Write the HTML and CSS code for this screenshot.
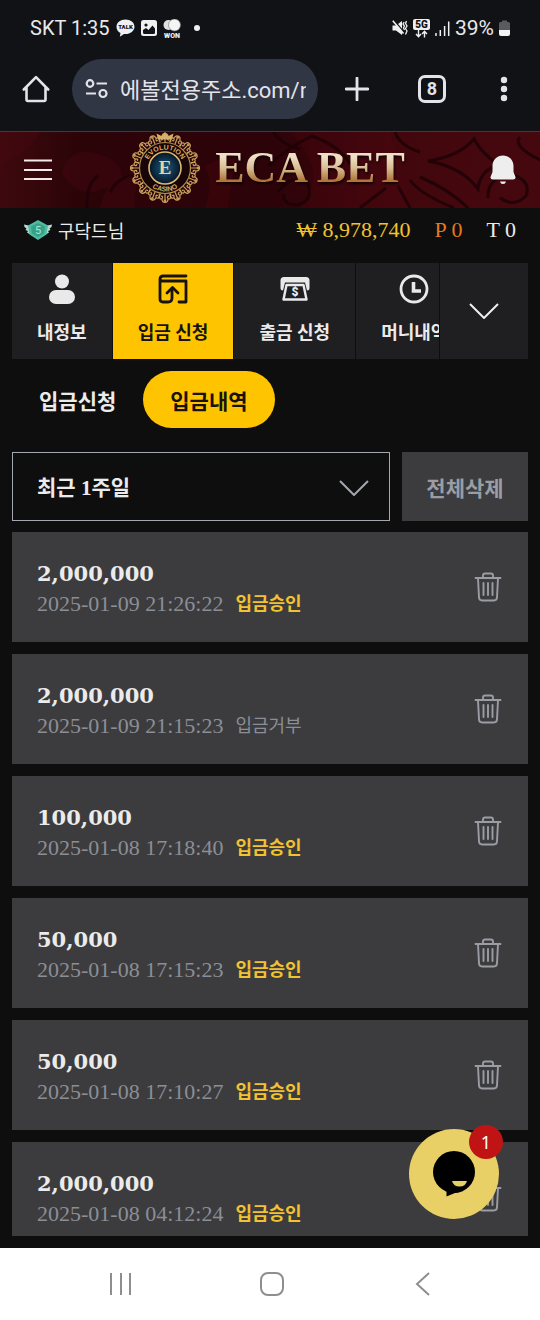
FILE: index.html
```html
<!DOCTYPE html>
<html lang="ko">
<head>
    <meta charset="UTF-8">
    <meta name="viewport" content="width=device-width, initial-scale=1.0">
    <title>ECA BET</title>
    <link rel="stylesheet" href="styles.css">
</head>
<body>
<div class="screen">

    <div class="status-bar">
        <div class="status-left">
            <span>SKT 1:35</span>
            <svg width="19" height="18" viewBox="0 0 19 18">
                <path d="M9.500 0.500C14.500 0.500 18.500 3.600 18.500 7.700S14.500 15 9.500 15L8 14.900L3.800 17.800L4.500 14C2 12.700 0.500 10.500 0.500 7.700C0.500 3.600 4.500 0.500 9.500 0.500Z" fill="#f0f0f0"/>
                <text x="9.500" y="10" class="icon-text talk">TALK</text>
            </svg>
            <svg width="16" height="16" viewBox="0 0 16 16">
                <rect width="16" height="16" rx="2.500" fill="#f0f0f0"/>
                <circle cx="5" cy="5" r="1.600" fill="#111216"/>
                <path d="M2 12.500V10L5 8L7.500 10L11.500 5.500L14 8.500V12.500Q14 14 12.500 14H3.500Q2 14 2 12.500Z" fill="#111216"/>
            </svg>
            <svg width="18" height="19" viewBox="0 0 18 19">
                <circle cx="5.500" cy="6" r="5" fill="#e0e0e0"/>
                <circle cx="11.500" cy="6" r="6" fill="#f4f4f4" stroke="#777" stroke-width="0.600"/>
                <text x="9" y="18.500" class="icon-text won">WON</text>
            </svg>
            <span class="dot"></span>
        </div>
        <div class="status-right">
            <svg width="16" height="16" viewBox="0 0 16 16">
                <path d="M0.500 5.500H4L10 1V15L4 10.500H0.500Z" fill="#f0f0f0"/>
                <path d="M1.800 0L12 12.200" stroke="#111216" stroke-width="1.400"/>
                <path d="M0.800 0.800L11.500 13.500" stroke="#f0f0f0" stroke-width="1.600"/>
                <path d="M12.200 2L11 4L12.500 6L11.500 8L12.500 10M14.500 1L13.500 3.500L15 6L13.500 8.500L15 11L13.500 14.500" fill="none" stroke="#f0f0f0" stroke-width="1.300"/>
            </svg>
            <svg width="17" height="19" viewBox="0 0 17 19">
                <rect width="17" height="11" rx="2" fill="#f0f0f0"/>
                <text x="8.500" y="9" class="icon-text net">5G</text>
                <path d="M5.500 11V17.500M3 15L5.500 17.700L8 15M11.500 18.500V12.500M9 15L11.500 12.300L14 15" fill="none" stroke="#f0f0f0" stroke-width="1.400"/>
            </svg>
            <svg width="15" height="15" viewBox="0 0 15 15">
                <path d="M1 12V15M5.300 9V15M9.600 5V15M13.700 0.500V15" stroke="#f0f0f0" stroke-width="1.500"/>
            </svg>
            <span class="battery-level">39%</span>
            <svg width="11" height="16" viewBox="0 0 11 16">
                <path d="M3 0.500H8V2H9.500Q11 2 11 3.500V10H0V3.500Q0 2 1.500 2H3Z" fill="#5a5b5e"/>
                <path d="M0 10H11V14Q11 16 9 16H2Q0 16 0 14Z" fill="#f4f4f4"/>
            </svg>
        </div>
    </div>

    <div class="browser-bar">
        <button class="bar-btn home-btn" aria-label="홈">
            <svg width="28" height="28" viewBox="0 0 28 28" fill="none" stroke="#e4e3ea" stroke-width="2.600" stroke-linejoin="round" stroke-linecap="round">
                <path d="M1.800 14.500L14 2.200L26.200 14.500M4.500 12.500V24.500Q4.500 26 6 26H22Q23.500 26 23.500 24.500V12.500"/>
            </svg>
        </button>
        <label class="address">
            <svg width="23" height="20" viewBox="0 0 23 20" fill="none" stroke="#e4e3ea" stroke-width="2.200">
                <circle cx="5" cy="4.500" r="3.300"/>
                <path d="M11.500 4.500H22M1 14.500H11"/>
                <circle cx="18" cy="14.500" r="3.500"/>
            </svg>
            <input type="text" class="address-input" aria-label="주소" value="에볼전용주소.com/n">
        </label>
        <button class="bar-btn plus-btn" aria-label="새 탭">
            <svg width="24" height="24" viewBox="0 0 24 24"><path d="M12 1V23M1 12H23" stroke="#e4e3ea" stroke-width="2.800" stroke-linecap="round"/></svg>
        </button>
        <button class="bar-btn" aria-label="탭 목록"><span class="tab-count">8</span></button>
        <button class="bar-btn" aria-label="메뉴">
            <svg width="8" height="26" viewBox="0 0 8 26" fill="#e4e3ea"><circle cx="4" cy="4" r="3.200"/><circle cx="4" cy="13" r="3.200"/><circle cx="4" cy="22" r="3.200"/></svg>
        </button>
    </div>

    <header class="header">
        <svg class="header-bg" viewBox="0 0 540 76" preserveAspectRatio="none">
            <defs>
                <linearGradient id="red" x1="0" x2="1">
                    <stop offset="0" stop-color="#3d090e"/>
                    <stop offset="0.150" stop-color="#2b0408"/>
                    <stop offset="0.500" stop-color="#2c0309"/>
                    <stop offset="0.750" stop-color="#42070d"/>
                    <stop offset="1" stop-color="#45080e"/>
                </linearGradient>
            </defs>
            <rect width="540" height="76" fill="url(#red)"/>
            <path d="M0 0H40Q30 22 0 32ZM62 40Q70 14 98 22Q126 28 122 58Q108 52 96 60Q72 62 62 40ZM100 76Q105 48 138 38L134 76Z" fill="#4a0810" opacity="0.350"/>
            <path d="M205 76Q214 50 204 34L236 20L228 76ZM290 0H390L410 76H300Q330 40 290 0Z" fill="#53080f" opacity="0.300"/>
            <g fill="none" stroke="#1c0206" stroke-width="3" opacity="0.800">
                <path d="M87 76Q86 52 98 44M110 60Q120 42 139 43"/>
                <path d="M268 34Q290 14 312 4Q340 14 350 32M273 0Q283 14 300 17M278 60Q292 40 308 52Q314 70 296 73Q282 72 284 62"/>
                <path d="M428 29Q460 24 474 7Q482 22 499 33Q480 38 478 57Q462 35 428 29Z"/>
                <path d="M410 48Q420 62 454 76M398 54L410 76M386 56L360 76M420 45Q450 58 468 76"/>
                <path d="M488 66Q487 46 510 42Q532 48 526 64Q514 76 500 66M520 5Q512 14 540 28M395 0Q400 14 420 20"/>
            </g>
        </svg>
        <button class="menu-btn" aria-label="전체 메뉴">
            <svg width="28" height="22" viewBox="0 0 28 22"><path d="M0 1.500H28M0 11H28M0 20H28" stroke="#f3e9ea" stroke-width="2"/></svg>
        </button>
        <a href="#" class="logo">
            <svg width="72" height="72" viewBox="-36 -36 72 72">
                <defs>
                    <radialGradient id="blue"><stop offset="0" stop-color="#1c5d85"/><stop offset="1" stop-color="#061524"/></radialGradient>
                    <path id="arc-top" d="M-18.500 0A18.500 18.500 0 0 1 18.500 0"/>
                    <path id="arc-bottom" d="M-23.500 0A23.500 23.500 0 0 0 23.500 0"/>
                    <g id="scroll" fill="none" stroke="#c9a15c" stroke-width="1.200">
                        <path d="M-4.500 -26C-7 -29 -5 -32 -3 -30.500C-1.500 -29 -3 -27.500 -4 -28.500M4.500 -26C7 -29 5 -32 3 -30.500C1.500 -29 3 -27.500 4 -28.500"/>
                        <path d="M-3 -31Q-3 -34.500 0 -34.500Q3 -34.500 3 -31M0 -26V-32"/>
                        <circle cx="0" cy="-33" r="0.800"/>
                    </g>
                    <g id="quarter">
                        <use href="#scroll"/>
                        <use href="#scroll" transform="rotate(22.500)"/>
                        <use href="#scroll" transform="rotate(45)"/>
                        <use href="#scroll" transform="rotate(67.500)"/>
                    </g>
                </defs>
                <circle r="27" fill="#180508"/>
                <use href="#quarter"/>
                <use href="#quarter" transform="rotate(90)"/>
                <use href="#quarter" transform="rotate(180)"/>
                <use href="#quarter" transform="rotate(270)"/>
                <circle r="25.500" fill="none" stroke="#b58d4a" stroke-width="1.200"/>
                <path d="M-7 -28.500L-8.500 -34.500L-3.500 -32L0 -36L3.500 -32L8.500 -34.500L7 -28.500Z" fill="#d6b067"/>
                <circle r="16" fill="url(#blue)" stroke="#dcb872" stroke-width="1.600"/>
                <text class="ring-text"><textPath href="#arc-top" startOffset="50%">EVOLUTION</textPath></text>
                <text class="ring-text"><textPath href="#arc-bottom" startOffset="50%">CASINO</textPath></text>
                <text y="6" class="emblem-letter">E</text>
            </svg>
            <span class="logo-text">ECA BET</span>
        </a>
        <button class="bell-btn" aria-label="알림">
            <svg width="26" height="30" viewBox="0 0 26 30" fill="#eeeeef">
                <path d="M13 0.500C19 0.500 23.500 5 23.500 11V17L25.500 22Q25.800 24.500 23 24.500H3Q0.200 24.500 0.500 22L2.500 17V11C2.500 5 7 0.500 13 0.500Z"/>
                <path d="M10 26.500H16Q15.500 29 13 29T10 26.500Z"/>
            </svg>
        </button>
    </header>

    <div class="user-bar">
        <svg width="28" height="20" viewBox="0 0 28 20">
            <path d="M0 4.500L7 6V15L3 12.500L4 11L1.500 10L2.500 8.500L0.500 7ZM28 4.500L21 6V15L25 12.500L24 11L26.500 10L25.500 8.500L27.500 7Z" fill="#b5ddd2"/>
            <path d="M14 0L24 5.500L22.500 14.500L14 20L5.500 14.500L4 5.500Z" fill="#4fbba1"/>
            <path d="M14 3L21 6.500L20 13.500L14 17L8 13.500L7 6.500Z" fill="#35a189"/>
            <text x="14" y="14" class="icon-text level">5</text>
        </svg>
        <span class="user-name">구닥드님</span>
        <span class="money">₩ 8,978,740</span>
        <span class="point">P 0</span>
        <span class="ticket">T 0</span>
    </div>

    <nav class="main-nav">
        <div class="nav-scroll">
            <a href="#" class="nav-item">
                <svg width="32" height="32" viewBox="0 0 32 32" fill="#e9e9ea"><circle cx="16" cy="8.500" r="7"/><rect x="3" y="17" width="26" height="14" rx="7"/></svg>
                <span>내정보</span>
            </a>
            <a href="#" class="nav-item active">
                <svg width="32" height="32" viewBox="0 0 32 32" fill="none" stroke="#171308" stroke-width="2.800" stroke-linecap="round" stroke-linejoin="round">
                    <path d="M29 3H6Q3 3 3 6V26Q3 29 6 29H11Q15 29 15 25V17M3 6Q3 8 6 8H29V29H22"/>
                    <path d="M10 20L15.500 14.500L21 20"/>
                </svg>
                <span>입금 신청</span>
            </a>
            <a href="#" class="nav-item">
                <svg width="32" height="32" viewBox="0 0 32 32">
                    <path d="M5 4H27Q30.500 4 30.500 7.500V15Q30.500 17.500 28 17.500L26 9.500H6L4 17.500Q1.500 17.500 1.500 15V7.500Q1.500 4 5 4Z" fill="#e9e9ea"/>
                    <path d="M7.500 12H24.500L27.500 26.500H4.500Z" fill="#1f1f21" stroke="#e9e9ea" stroke-width="2.400" stroke-linejoin="round"/>
                    <text x="16" y="23" class="icon-text cash">$</text>
                </svg>
                <span>출금 신청</span>
            </a>
            <a href="#" class="nav-item">
                <svg width="32" height="32" viewBox="0 0 32 32" fill="none" stroke="#e9e9ea"><circle cx="16" cy="16" r="13" stroke-width="2.800"/><path d="M15.500 9V18H23" stroke-width="3.600"/></svg>
                <span>머니내역</span>
            </a>
        </div>
        <button class="nav-more" aria-label="더보기">
            <svg width="30" height="16" viewBox="0 0 30 16"><path d="M1 1L15 15L29 1" fill="none" stroke="#eeeeee" stroke-width="2"/></svg>
        </button>
    </nav>

    <div class="tabs">
        <button class="tab">입금신청</button>
        <button class="tab active">입금내역</button>
    </div>

    <div class="filters">
        <div class="period">
            <select class="period-select" aria-label="기간">
                <option>최근 1주일</option>
            </select>
            <svg class="period-arrow" width="30" height="16" viewBox="0 0 30 16"><path d="M1 1L15 15L29 1" fill="none" stroke="#a3a8b0" stroke-width="2"/></svg>
        </div>
        <button class="delete-all">전체삭제</button>
    </div>

    <svg class="symbols">
        <symbol id="trash" viewBox="0 0 28 30">
            <g fill="none" stroke="#9a9da4" stroke-width="1.900" stroke-linejoin="round" stroke-linecap="round">
                <path d="M1.500 6H26.500M9 5.500V3.500Q9 1.500 11 1.500H17Q19 1.500 19 3.500V5.500"/>
                <path d="M4 6L5 25.500Q5.300 28.500 8 28.500H20Q22.700 28.500 23 25.500L24 6"/>
                <path d="M9.500 11V23M14 11V23M18.500 11V23"/>
            </g>
        </symbol>
    </svg>

    <ul class="history">
        <li class="card">
            <div class="card-text">
                <div class="amount">2,000,000</div>
                <div class="detail"><time>2025-01-09 21:26:22</time><span class="approved">입금승인</span></div>
            </div>
            <button class="trash-btn" aria-label="삭제"><svg width="28" height="30"><use href="#trash"/></svg></button>
        </li>
        <li class="card">
            <div class="card-text">
                <div class="amount">2,000,000</div>
                <div class="detail"><time>2025-01-09 21:15:23</time><span class="rejected">입금거부</span></div>
            </div>
            <button class="trash-btn" aria-label="삭제"><svg width="28" height="30"><use href="#trash"/></svg></button>
        </li>
        <li class="card">
            <div class="card-text">
                <div class="amount">100,000</div>
                <div class="detail"><time>2025-01-08 17:18:40</time><span class="approved">입금승인</span></div>
            </div>
            <button class="trash-btn" aria-label="삭제"><svg width="28" height="30"><use href="#trash"/></svg></button>
        </li>
        <li class="card">
            <div class="card-text">
                <div class="amount">50,000</div>
                <div class="detail"><time>2025-01-08 17:15:23</time><span class="approved">입금승인</span></div>
            </div>
            <button class="trash-btn" aria-label="삭제"><svg width="28" height="30"><use href="#trash"/></svg></button>
        </li>
        <li class="card">
            <div class="card-text">
                <div class="amount">50,000</div>
                <div class="detail"><time>2025-01-08 17:10:27</time><span class="approved">입금승인</span></div>
            </div>
            <button class="trash-btn" aria-label="삭제"><svg width="28" height="30"><use href="#trash"/></svg></button>
        </li>
        <li class="card">
            <div class="card-text">
                <div class="amount">2,000,000</div>
                <div class="detail"><time>2025-01-08 04:12:24</time><span class="approved">입금승인</span></div>
            </div>
            <button class="trash-btn" aria-label="삭제"><svg width="28" height="30"><use href="#trash"/></svg></button>
        </li>
    </ul>

    <button class="chat-btn" aria-label="채팅 상담">
        <svg width="44" height="48" viewBox="0 0 44 48">
            <circle cx="22" cy="22" r="21" fill="#000"/>
            <path d="M14.500 38V46.500L35 38Z" fill="#000"/>
            <path d="M20 31H35Q33.500 36.500 27.500 36.500T20 31Z" fill="#e8cf66"/>
        </svg>
        <span class="chat-badge">1</span>
    </button>

    <div class="system-nav">
        <button class="sys-btn" aria-label="최근 앱">
            <svg width="24" height="24" viewBox="0 0 24 24"><path d="M2 1V23M12 1V23M21 1V23" stroke="#8e8e8e" stroke-width="2"/></svg>
        </button>
        <button class="sys-btn" aria-label="홈 화면">
            <svg width="24" height="24" viewBox="0 0 24 24"><rect x="1" y="1" width="22" height="22" rx="7" fill="none" stroke="#8e8e8e" stroke-width="2"/></svg>
        </button>
        <button class="sys-btn" aria-label="뒤로">
            <svg width="24" height="24" viewBox="0 0 24 24"><path d="M18 1L6 12L18 23" fill="none" stroke="#8e8e8e" stroke-width="2"/></svg>
        </button>
    </div>

</div>
</body>
</html>
```
FILE: styles.css
```css
* {
    box-sizing: border-box;
}
body {
    margin: 0;
    background-color: #0e0e0e;
    color: #ebebeb;
    font-family: "Liberation Serif", "Noto Sans CJK KR", serif;
}
button {
    padding: 0;
    border: none;
    background: none;
    color: inherit;
    font-family: inherit;
    cursor: pointer;
}
a {
    color: inherit;
    text-decoration: none;
}
svg {
    display: block;
    flex-shrink: 0;
}
.screen {
    position: relative;
    display: flex;
    flex-direction: column;
    height: 100vh;
    overflow: hidden;
}
.screen > * {
    flex-shrink: 0;
}
.icon-text {
    font-family: Roboto, "Liberation Sans", sans-serif;
    font-weight: 900;
    text-anchor: middle;
}
.talk {
    font-size: 6px;
    fill: #111216;
}
.won {
    font-size: 7px;
    fill: #f0f0f0;
}
.net {
    font-size: 10px;
    fill: #111216;
}
.level {
    font-size: 11px;
    font-weight: 400;
    fill: #a5e6d6;
}
.cash {
    font-size: 12px;
    fill: #e9e9ea;
}

/* phone status bar */
.status-bar {
    display: flex;
    justify-content: space-between;
    align-items: center;
    height: 56px;
    padding: 0 30px;
    background-color: #111216;
    color: #e9e9ea;
    font-family: Roboto, sans-serif;
    font-size: 20px;
}
.status-left, .status-right {
    display: flex;
    align-items: center;
    gap: 6px;
}
.status-right {
    gap: 5px;
}
.battery-level {
    font-size: 21px;
}
.dot {
    width: 6px;
    height: 6px;
    margin-left: 7px;
    border-radius: 50%;
    background-color: #f0f0f0;
}

/* browser bar */
.browser-bar {
    display: flex;
    align-items: center;
    padding: 3px 0 12px;
    background-color: #111216;
    border-bottom: 1px solid #3c3b40;
}
.bar-btn {
    display: flex;
    justify-content: center;
    align-items: center;
    width: 72px;
    height: 60px;
}
.plus-btn {
    width: 78px;
}
.address {
    display: flex;
    flex: 1;
    align-items: center;
    gap: 12px;
    min-width: 0;
    height: 60px;
    padding: 0 12px 0 13px;
    border-radius: 30px;
    background-color: #313645;
}
.address-input {
    flex: 1;
    min-width: 0;
    padding: 0 0 3px;
    border: none;
    outline: none;
    background: none;
    color: #e4e3ea;
    font-family: Roboto, "Noto Sans CJK KR", sans-serif;
    font-size: 22px;
}
.tab-count {
    width: 28px;
    height: 28px;
    border: 3px solid #e4e3ea;
    border-radius: 7px;
    color: #e4e3ea;
    font-family: Roboto, sans-serif;
    font-size: 18px;
    font-weight: 700;
    line-height: 22px;
}

/* site header */
.header {
    position: relative;
    display: flex;
    justify-content: space-between;
    align-items: center;
    height: 76px;
    padding: 0 24px;
}
.header-bg {
    position: absolute;
    inset: 0;
    width: 100%;
    height: 100%;
}
.menu-btn, .bell-btn, .logo {
    position: relative;
}
.logo {
    display: flex;
    align-items: center;
    gap: 14px;
    padding: 0 8px 4px 0;
}
.logo-text {
    background: linear-gradient(#f0dfc4 25%, #d9bd93 50%, #b0763a 78%);
    background-clip: text;
    -webkit-background-clip: text;
    color: transparent;
    font-size: 44px;
    font-weight: 700;
    line-height: 44px;
    filter: drop-shadow(1px 2px 1px #120204);
}
.ring-text {
    fill: #d6b067;
    font-family: "Liberation Sans", sans-serif;
    font-size: 7px;
    font-weight: 700;
    text-anchor: middle;
}
.emblem-letter {
    fill: #ecd294;
    font-size: 19px;
    font-weight: 700;
    text-anchor: middle;
}

/* user info */
.user-bar {
    display: flex;
    align-items: center;
    height: 44px;
    padding: 0 24px;
    font-size: 22px;
}
.user-name {
    margin: 0 auto 0 6px;
    font-size: 18px;
}
.money {
    color: #f2c230;
}
.point {
    margin: 0 24px;
    color: #e5791c;
}

/* main menu */
.main-nav {
    display: flex;
    margin: 11px 12px 0;
    height: 96px;
}
.nav-scroll {
    display: flex;
    flex: 1;
    min-width: 0;
    overflow: hidden;
}
.nav-item {
    display: flex;
    flex-direction: column;
    flex-shrink: 0;
    align-items: center;
    gap: 13px;
    padding: 10px 25px 0;
    border-right: 1px solid #0e0e0e;
    background-color: #1f1f21;
    font-size: 18px;
    font-weight: 700;
    line-height: 30px;
}
.nav-item.active {
    background-color: #ffc400;
    color: #171308;
}
.nav-more {
    display: flex;
    justify-content: center;
    align-items: center;
    width: 89px;
    border-left: 1px solid #0e0e0e;
    background-color: #1f1f21;
}

/* sub tabs */
.tabs {
    display: flex;
    margin: 12px 12px 0;
}
.tab {
    height: 57px;
    padding: 0 27px;
    border-radius: 29px;
    font-size: 21px;
    font-weight: 700;
}
.tab.active {
    background-color: #ffc400;
    color: #171308;
}

/* filter row */
.filters {
    display: flex;
    gap: 12px;
    height: 69px;
    margin: 24px 12px 0;
}
.period {
    position: relative;
    flex: 1;
}
.period-select {
    appearance: none;
    width: 100%;
    height: 100%;
    padding: 2px 24px 0;
    border: 1px solid #a3a8b0;
    border-radius: 0;
    background-color: #0e0e0e;
    color: #ebebeb;
    font-family: inherit;
    font-size: 21px;
    font-weight: 700;
}
.period-arrow {
    position: absolute;
    top: 28px;
    right: 21px;
    pointer-events: none;
}
.delete-all {
    width: 126px;
    background-color: #3c3c3e;
    color: #9a9da4;
    font-size: 21px;
    font-weight: 700;
}

/* deposit history */
.symbols {
    display: none;
}
.history {
    display: flex;
    flex: 1 1 0;
    flex-direction: column;
    gap: 12px;
    min-height: 0;
    margin: 11px 12px 12px;
    padding: 0;
    list-style: none;
    overflow: hidden;
}
.card {
    display: flex;
    flex-shrink: 0;
    justify-content: space-between;
    align-items: center;
    height: 110px;
    padding: 0 26px 0 25px;
    background-color: #3c3c3e;
}
.card-text {
    padding-top: 4px;
}
.amount {
    font-family: "DejaVu Serif", serif;
    font-size: 21px;
    font-weight: 700;
    line-height: 30px;
}
.detail {
    display: flex;
    align-items: center;
    gap: 12px;
    color: #8b8e96;
    font-size: 22px;
    line-height: 30px;
}
.approved {
    color: #f2c230;
    font-size: 18px;
    font-weight: 700;
}
.rejected {
    font-size: 18px;
}

/* chat button */
.chat-btn {
    position: absolute;
    right: 41px;
    bottom: 101px;
    display: flex;
    justify-content: center;
    align-items: center;
    width: 90px;
    height: 90px;
    border-radius: 50%;
    background-color: #e8cf66;
}
.chat-badge {
    position: absolute;
    top: -4px;
    right: -4px;
    width: 34px;
    height: 34px;
    border-radius: 50%;
    background-color: #c01414;
    color: #fff;
    font-family: "Noto Sans", sans-serif;
    font-size: 18px;
    line-height: 34px;
}

/* phone navigation */
.system-nav {
    display: flex;
    height: 72px;
    padding: 0 42px 0 46px;
    background-color: #fff;
}
.sys-btn {
    display: flex;
    flex: 1;
    justify-content: center;
    align-items: center;
}
```
